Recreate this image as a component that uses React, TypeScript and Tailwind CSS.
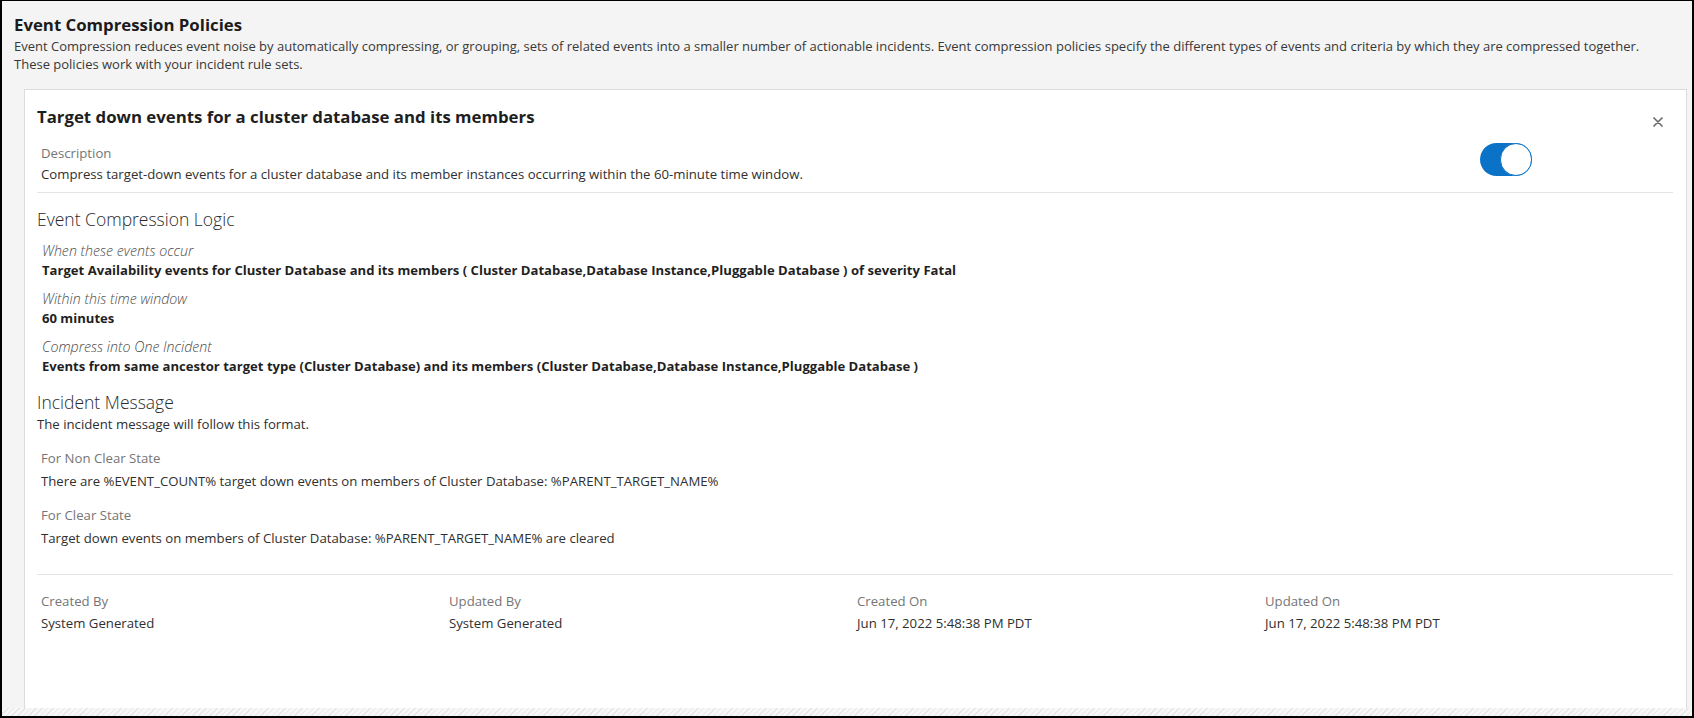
const font = "font-['Open_Sans','Noto_Sans',sans-serif]";

function CloseIcon() {
    return (
        <svg width="10" height="10" viewBox="0 0 10 10" className="block">
            <path d="M1 1L9 9M9 1L1 9" stroke="#6b6b6b" strokeWidth="1.7" strokeLinecap="round" />
        </svg>
    );
}

function Toggle() {
    return (
        <div className="relative w-[52px] h-[33px] rounded-full bg-[#0a73c8] shrink-0">
            <div className="absolute right-0 top-0 w-[32px] h-[33px] rounded-full bg-white border-[1.5px] border-[#0a73c8]" />
        </div>
    );
}

function LogicItem({ label, value }: { label: string; value: string }) {
    return (
        <div className="pl-[5px]">
            <div className="italic font-light text-[14.2px] text-[#4a4a4a] leading-[18px]">{label}</div>
            <div className="font-bold text-[13.1px] text-[#1f1f1f] leading-[18px] mt-px">{value}</div>
        </div>
    );
}

function MessageItem({ label, value }: { label: string; value: string }) {
    return (
        <div className="pl-[4px]">
            <div className="text-[#757575] leading-[18px]">{label}</div>
            <div className="text-[#2f2f2f] leading-[18px] mt-[5px]">{value}</div>
        </div>
    );
}

function MetaItem({ label, value }: { label: string; value: string }) {
    return (
        <div>
            <div className="text-[#757575] leading-[18px]">{label}</div>
            <div className="text-[#2f2f2f] leading-[18px] mt-[4px]">{value}</div>
        </div>
    );
}

export default function App() {
    return (
        <div
            className={`${font} w-[1694px] h-[718px] flex flex-col overflow-hidden bg-[#f4f4f4] border-black border-t border-l-2 border-r-2 border-b-2 text-[13.2px] text-[#333333]`}
        >
            {/* Page header */}
            <div className="pl-[12px] pt-[12px] pr-[5px]">
                <h1 className="text-[16.8px] font-bold leading-[23px] text-[#1b1b1b]">Event Compression Policies</h1>
                <p className="mt-px text-[13px] leading-[18px] text-[#383838]">
                    Event Compression reduces event noise by automatically compressing, or grouping, sets of related events into a smaller number of actionable incidents. Event compression policies specify the different types of events and criteria by which they are compressed together.
                    <br />
                    These policies work with your incident rule sets.
                </p>
            </div>

            {/* Policy card */}
            <div className="flex-1 mt-4 ml-[22px] mr-[5px] bg-white border border-[#dcdcdc] border-b-0 pl-[12px] pr-[13px] pt-[15px]">
                <div className="flex items-start justify-between">
                    <h2 className="text-[16.8px] font-bold leading-[23px] text-[#1e1e1e]">
                        Target down events for a cluster database and its members
                    </h2>
                    <div className="mt-[12px] mr-[10px]">
                        <CloseIcon />
                    </div>
                </div>

                <div className="flex items-start justify-between mt-4">
                    <div className="pl-[4px]">
                        <div className="text-[#757575] leading-[18px]">Description</div>
                        <div className="text-[#2f2f2f] leading-[18px] mt-[3px]">
                            Compress target-down events for a cluster database and its member instances occurring within the 60-minute time window.
                        </div>
                    </div>
                    <div className="mr-[141px] -mt-px">
                        <Toggle />
                    </div>
                </div>

                <div className="h-px bg-[#e4e4e4] mt-[9px]" />

                {/* Logic */}
                <h3 className="text-[17.5px] font-light leading-[23px] text-[#2a2a2a] mt-[15px]">Event Compression Logic</h3>
                <div className="flex flex-col gap-[11px] mt-[11px]">
                    <LogicItem
                        label="When these events occur"
                        value="Target Availability events for Cluster Database and its members ( Cluster Database,Database Instance,Pluggable Database ) of severity Fatal"
                    />
                    <LogicItem label="Within this time window" value="60 minutes" />
                    <LogicItem
                        label="Compress into One Incident"
                        value="Events from same ancestor target type (Cluster Database) and its members (Cluster Database,Database Instance,Pluggable Database )"
                    />
                </div>

                {/* Incident message */}
                <h3 className="text-[17.5px] font-light leading-[23px] text-[#2a2a2a] mt-[16px]">Incident Message</h3>
                <div className="leading-[18px] text-[#2f2f2f] mt-px">The incident message will follow this format.</div>
                <div className="flex flex-col gap-[16px] mt-[16px]">
                    <MessageItem
                        label="For Non Clear State"
                        value="There are %EVENT_COUNT% target down events on members of Cluster Database: %PARENT_TARGET_NAME%"
                    />
                    <MessageItem
                        label="For Clear State"
                        value="Target down events on members of Cluster Database: %PARENT_TARGET_NAME% are cleared"
                    />
                </div>

                <div className="h-px bg-[#e4e4e4] mt-[27px]" />

                {/* Meta */}
                <div className="grid grid-cols-4 pl-[4px] mt-[17px]">
                    <MetaItem label="Created By" value="System Generated" />
                    <MetaItem label="Updated By" value="System Generated" />
                    <MetaItem label="Created On" value="Jun 17, 2022 5:48:38 PM PDT" />
                    <MetaItem label="Updated On" value="Jun 17, 2022 5:48:38 PM PDT" />
                </div>
            </div>
            <div className="h-[8px] shrink-0 bg-[repeating-linear-gradient(135deg,#e6e6e6_0px,#e6e6e6_1px,#f7f7f7_1px,#f7f7f7_4px)]" />
        </div>
    );
}
